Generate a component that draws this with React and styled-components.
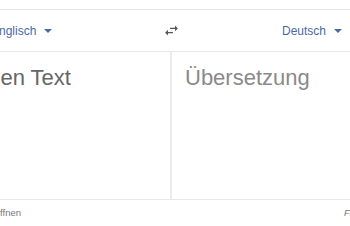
import React from 'react';
import styled, { createGlobalStyle } from 'styled-components';

const GlobalStyle = createGlobalStyle`
  html, body {
    margin: 0;
    padding: 0;
    background: #fff;
    overflow: hidden;
    font-family: "Liberation Sans", Arial, sans-serif;
  }
`;

const Page = styled.div`
  width: 350px;
  height: 226px;
  overflow: hidden;
  padding-top: 9px;
  box-sizing: border-box;
  background: #fff;
`;

// the widget is wider than the window and scrolled to the right
const Widget = styled.div`
  width: 648px;
  margin-left: -153px;
`;

const Header = styled.div`
  display: grid;
  grid-template-columns: 1fr 40px 1fr;
  align-items: center;
  height: 41px;
  border-top: 1px solid #e8e8e8;
  border-bottom: 1px solid #e8e8e8;
  background: #fff;
`;

const LangCell = styled.div`
  display: flex;
  align-items: center;
  padding-left: ${p => p.$pad}px;
`;

const LangButton = styled.button`
  display: flex;
  align-items: center;
  gap: 8px;
  border: none;
  background: none;
  padding: 0;
  font-family: inherit;
  font-size: 12px;
  color: #4a6aa5;
  cursor: pointer;
  white-space: nowrap;
`;

const Caret = styled.span`
  width: 0;
  height: 0;
  border-left: 4px solid transparent;
  border-right: 4px solid transparent;
  border-top: 4px solid #4a6aa5;
  margin-top: 1px;
`;

const SwapButton = styled.button`
  display: flex;
  align-items: center;
  justify-content: center;
  border: none;
  background: none;
  padding: 0;
  color: #555;
  cursor: pointer;
`;

const Panels = styled.div`
  display: grid;
  grid-template-columns: 324px 324px;
  height: 148px;
`;

const Panel = styled.div`
  box-sizing: border-box;
  padding: 13px ${p => (p.$side === 'left' ? 14 : 13)}px;
  border-bottom: 1px solid #e8e8e8;
  ${p => (p.$side === 'left' ? 'border-right: 1px solid #ececec;' : 'border-left: 1px solid #ececec;')}
  font-size: 22px;
  white-space: nowrap;
  color: ${p => (p.$side === 'left' ? '#666' : '#8a8a8a')};
`;

const Footer = styled.div`
  display: grid;
  grid-template-columns: 324px 324px;
  height: 25px;
  align-items: center;
  font-size: 9.5px;
  color: #777;
`;

const FooterLink = styled.span`
  padding-left: ${p => p.$pad}px;
  font-style: ${p => (p.$italic ? 'italic' : 'normal')};
  white-space: nowrap;
`;

const SwapIcon = () => (
  <svg width="17" height="17" viewBox="0 0 24 24" fill="currentColor">
    <path d="M6.99 11L3 15l3.99 4v-3H14v-2H6.99v-3zM21 9l-3.99-4v3H10v2h7.01v3L21 9z" />
  </svg>
);

const App = () => (
  <>
    <GlobalStyle />
    <Page>
      <Widget>
        <Header>
          <LangCell $pad={144}>
            <LangButton>
              Englisch <Caret />
            </LangButton>
          </LangCell>
          <SwapButton>
            <SwapIcon />
          </SwapButton>
          <LangCell $pad={91}>
            <LangButton>
              Deutsch <Caret />
            </LangButton>
          </LangCell>
        </Header>
        <Panels>
          <Panel $side="left">Geben Sie einen Text</Panel>
          <Panel $side="right">Übersetzung</Panel>
        </Panels>
        <Footer>
          <FooterLink $pad={123}>Datei öffnen</FooterLink>
          <FooterLink $pad={173} $italic>Feedback geben</FooterLink>
        </Footer>
      </Widget>
    </Page>
  </>
);

export default App;
